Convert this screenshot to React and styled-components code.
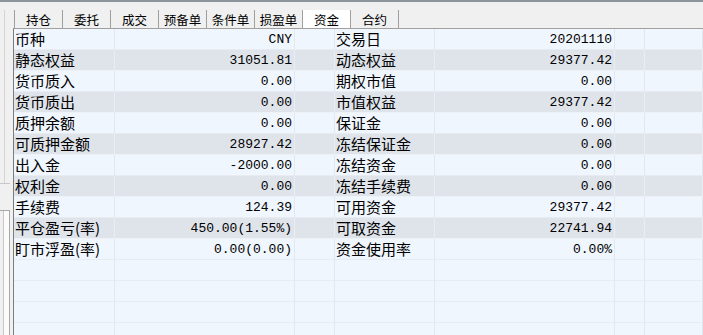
import React from "react";
import styled, { createGlobalStyle } from "styled-components";

const Global = createGlobalStyle`
  html, body { margin: 0; padding: 0; background: #f0f0f0; }
  body { overflow: hidden; }
`;

const Page = styled.div`
  width: 703px;
  height: 335px;
  background: #f0f0f0;
  overflow: hidden;
  display: flex;
  flex-direction: column;
`;

const TopBar = styled.div`
  height: 2px;
  flex: none;
  background: #8c949c;
`;

const Body = styled.div`
  flex: 1;
  display: flex;
  min-height: 0;
`;

const LeftStrip = styled.div`
  width: 13px;
  flex: none;
  display: flex;
  flex-direction: column;
`;

const UpperBox = styled.div`
  margin-top: 8px;
  height: 173px;
  width: 10px;
  border-bottom: 1px solid #c8c8c8;
  background: linear-gradient(to right, transparent 4px, #d4d4d4 4px, #d4d4d4 5px, transparent 5px);
`;

const LowerBox = styled.div`
  margin-top: 26px;
  flex: 1;
  width: 9px;
  border-top: 1px solid #a8a8a8;
  border-right: 1px solid #a8a8a8;
  background: linear-gradient(to right, transparent 3px, #c8c8c8 3px, #c8c8c8 4px, #fbfbfb 4px);
`;

const Main = styled.div`
  flex: 1;
  display: flex;
  flex-direction: column;
  min-width: 0;
`;

const TabBar = styled.div`
  display: flex;
  margin-top: 8px;
  height: 18px;
  padding-left: 1px;
`;

const Tab = styled.div`
  width: 47px;
  height: 18px;
  border-right: 1px solid #a0a0a0;
  border-left: ${(p) => (p.$first ? "1px solid #a0a0a0" : "none")};
  background: ${(p) => (p.$active ? "#ffffff" : "transparent")};
  font-family: "Noto Sans CJK SC", sans-serif;
  font-size: 12.5px;
  line-height: 19px;
  color: #000;
  text-align: center;
`;

const Table = styled.div`
  flex: 1;
  border-top: 1px solid #a0a0a0;
  border-left: 1px solid #7c7c7c;
  background: #f0f6fe;
  display: grid;
  grid-template-columns: 101px 180px 40px 100px 180px 30px 1fr;
  grid-auto-rows: 21px;
  align-content: start;
`;

const Cell = styled.div`
  box-sizing: border-box;
  height: 21px;
  border-right: 1px solid ${(p) => (p.$dark ? "#eaeef2" : "#e4e8ec")};
  border-bottom: 1px solid ${(p) => (p.$dark ? "#eef2f6" : "#e8ecf0")};
  background: ${(p) => (p.$dark ? "#dfe4eb" : "#f0f6fe")};
  color: #000;
  white-space: nowrap;
  overflow: hidden;
`;

const LabelCell = styled(Cell)`
  font-family: "Noto Sans CJK SC", sans-serif;
  font-size: 15px;
  line-height: 20px;
  padding-left: 1px;
`;

const ValueCell = styled(Cell)`
  font-family: "Liberation Mono", monospace;
  font-size: 13px;
  line-height: 21px;
  text-align: right;
  padding-right: 2px;
`;

const tabs = ["持仓", "委托", "成交", "预备单", "条件单", "损盈单", "资金", "合约"];

const rows = [
  ["币种", "CNY", "交易日", "20201110"],
  ["静态权益", "31051.81", "动态权益", "29377.42"],
  ["货币质入", "0.00", "期权市值", "0.00"],
  ["货币质出", "0.00", "市值权益", "29377.42"],
  ["质押余额", "0.00", "保证金", "0.00"],
  ["可质押金额", "28927.42", "冻结保证金", "0.00"],
  ["出入金", "-2000.00", "冻结资金", "0.00"],
  ["权利金", "0.00", "冻结手续费", "0.00"],
  ["手续费", "124.39", "可用资金", "29377.42"],
  ["平仓盈亏(率)", "450.00(1.55%)", "可取资金", "22741.94"],
  ["盯市浮盈(率)", "0.00(0.00)", "资金使用率", "0.00%"],
  ["", "", "", ""],
  ["", "", "", ""],
  ["", "", "", ""],
  ["", "", "", ""],
];

export default function App() {
  return (
    <>
      <Global />
      <Page>
        <TopBar />
        <Body>
          <LeftStrip>
            <UpperBox />
            <LowerBox />
          </LeftStrip>
          <Main>
            <TabBar>
              {tabs.map((t, i) => (
                <Tab key={t} $first={i === 0} $active={t === "资金"}>
                  {t}
                </Tab>
              ))}
            </TabBar>
            <Table>
              {rows.map((r, i) => {
                const dark = i % 2 === 1 && i < 11;
                return (
                  <React.Fragment key={i}>
                    <LabelCell $dark={dark}>{r[0]}</LabelCell>
                    <ValueCell $dark={dark}>{r[1]}</ValueCell>
                    <Cell $dark={dark} />
                    <LabelCell $dark={dark}>{r[2]}</LabelCell>
                    <ValueCell $dark={dark}>{r[3]}</ValueCell>
                    <Cell $dark={dark} />
                    <Cell $dark={dark} />
                  </React.Fragment>
                );
              })}
            </Table>
          </Main>
        </Body>
      </Page>
    </>
  );
}
